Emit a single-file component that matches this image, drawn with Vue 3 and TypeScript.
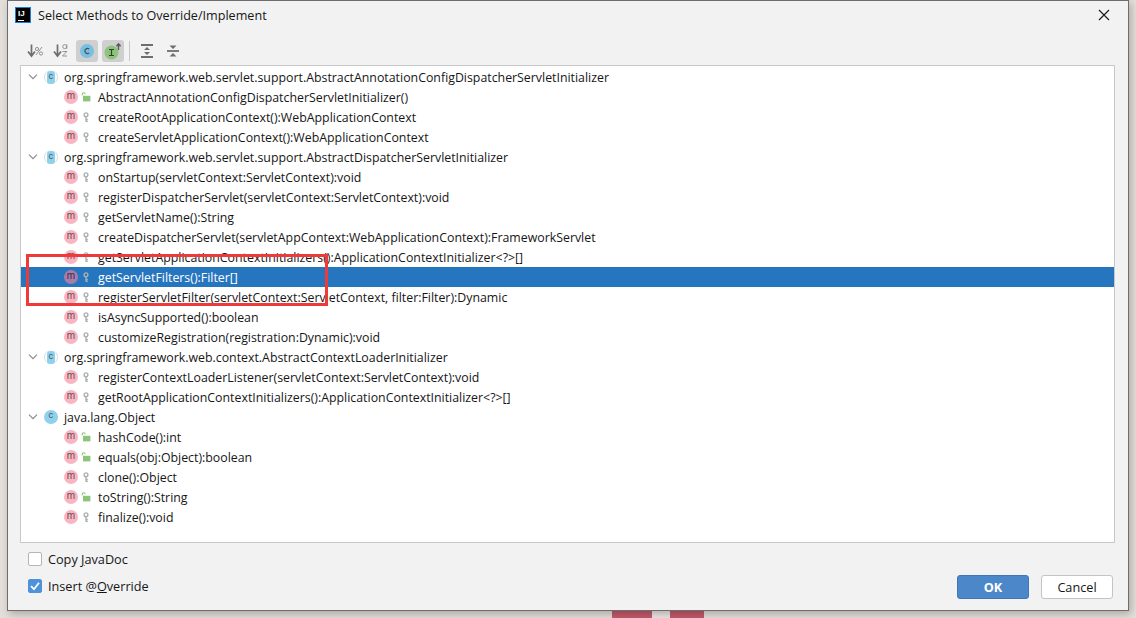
<script setup lang="ts">
type Access = 'public' | 'protected'
interface Method { label: string; access: Access; selected?: boolean }
interface Group { name: string; ghost: boolean; methods: Method[] }

const groups: Group[] = [
  {
    name: 'org.springframework.web.servlet.support.AbstractAnnotationConfigDispatcherServletInitializer',
    ghost: true,
    methods: [
      { label: 'AbstractAnnotationConfigDispatcherServletInitializer()', access: 'public' },
      { label: 'createRootApplicationContext():WebApplicationContext', access: 'protected' },
      { label: 'createServletApplicationContext():WebApplicationContext', access: 'protected' },
    ],
  },
  {
    name: 'org.springframework.web.servlet.support.AbstractDispatcherServletInitializer',
    ghost: true,
    methods: [
      { label: 'onStartup(servletContext:ServletContext):void', access: 'protected' },
      { label: 'registerDispatcherServlet(servletContext:ServletContext):void', access: 'protected' },
      { label: 'getServletName():String', access: 'protected' },
      { label: 'createDispatcherServlet(servletAppContext:WebApplicationContext):FrameworkServlet', access: 'protected' },
      { label: 'getServletApplicationContextInitializers():ApplicationContextInitializer<?>[]', access: 'protected' },
      { label: 'getServletFilters():Filter[]', access: 'protected', selected: true },
      { label: 'registerServletFilter(servletContext:ServletContext, filter:Filter):Dynamic', access: 'protected' },
      { label: 'isAsyncSupported():boolean', access: 'protected' },
      { label: 'customizeRegistration(registration:Dynamic):void', access: 'protected' },
    ],
  },
  {
    name: 'org.springframework.web.context.AbstractContextLoaderInitializer',
    ghost: true,
    methods: [
      { label: 'registerContextLoaderListener(servletContext:ServletContext):void', access: 'protected' },
      { label: 'getRootApplicationContextInitializers():ApplicationContextInitializer<?>[]', access: 'protected' },
    ],
  },
  {
    name: 'java.lang.Object',
    ghost: false,
    methods: [
      { label: 'hashCode():int', access: 'public' },
      { label: 'equals(obj:Object):boolean', access: 'public' },
      { label: 'clone():Object', access: 'protected' },
      { label: 'toString():String', access: 'public' },
      { label: 'finalize():void', access: 'protected' },
    ],
  },
]
</script>

<template>
  <div class="desktop">
    <div class="dialog">
      <header class="titlebar">
        <div class="logo"><span class="logo-text">IJ</span><span class="logo-bar"></span></div>
        <span class="title">Select Methods to Override/Implement</span>
        <svg class="close" width="12" height="12" viewBox="0 0 12 12">
          <path d="M1 1L11 11M11 1L1 11" stroke="#1a1a1a" stroke-width="1.2" fill="none" />
        </svg>
      </header>

      <div class="toolbar">
        <span class="tool">
          <svg width="18" height="16" viewBox="0 0 18 16">
            <path d="M5.5 1.5V12M2 8.5L5.5 13L9 8.5" stroke="#6e6e6e" stroke-width="1.7" fill="none" />
            <path d="M10 12L16 4" stroke="#929292" stroke-width="1" />
            <circle cx="11" cy="6" r="1.6" stroke="#929292" fill="none" />
            <circle cx="15" cy="10.5" r="1.6" stroke="#929292" fill="none" />
          </svg>
        </span>
        <span class="tool">
          <svg width="18" height="16" viewBox="0 0 18 16">
            <path d="M5.5 1.5V12M2 8.5L5.5 13L9 8.5" stroke="#6e6e6e" stroke-width="1.7" fill="none" />
            <circle cx="12.7" cy="3.6" r="2" stroke="#929292" fill="none" />
            <path d="M14.8 1.4V5.8M10.5 8.5H14.9L10.5 13H15.1" stroke="#929292" fill="none" />
          </svg>
        </span>
        <span class="tool on">
          <svg width="16" height="16" viewBox="0 0 16 16">
            <circle cx="8" cy="8" r="7" fill="#78bfe0" />
            <path d="M10.2 6.2A2.5 2.5 0 1 0 10.2 9.8" stroke="#40525e" stroke-width="1.1" fill="none" />
          </svg>
        </span>
        <span class="tool on">
          <svg width="20" height="20" viewBox="0 0 20 20">
            <circle cx="8.5" cy="11.5" r="7" fill="#8cc47c" />
            <path d="M6 8.5H11M8.5 8.5V14.5M6 14.5H11" stroke="#35412f" stroke-width="1.2" fill="none" />
            <path d="M15.5 9V3M13.4 5.2L15.5 2.8L17.6 5.2" stroke="#5a5a5a" stroke-width="1.4" fill="none" />
          </svg>
        </span>
        <span class="divider"></span>
        <span class="tool">
          <svg width="14" height="16" viewBox="0 0 14 16">
            <path d="M1 2H13M1 14H13" stroke="#6e6e6e" stroke-width="1.8" />
            <path d="M7 4L10 7H4ZM7 12L4 9H10Z" fill="#6e6e6e" />
          </svg>
        </span>
        <span class="tool">
          <svg width="14" height="16" viewBox="0 0 14 16">
            <path d="M1 8H13" stroke="#6e6e6e" stroke-width="1.8" />
            <path d="M7 6L3.5 2.6H10.5ZM7 10L10.5 13.4H3.5Z" fill="#6e6e6e" />
          </svg>
        </span>
      </div>

      <section class="tree">
        <template v-for="group in groups" :key="group.name">
          <div class="row">
            <svg class="chevron" width="10" height="6" viewBox="0 0 10 6">
              <path d="M1 .7L5 4.7L9 .7" stroke="#8c8c8c" stroke-width="1.2" fill="none" />
            </svg>
            <span class="class-wrap" :class="{ ghost: group.ghost }">
              <span class="class-icon">c</span>
            </span>
            <span class="text">{{ group.name }}</span>
          </div>
          <div
            v-for="method in group.methods"
            :key="method.label"
            class="row method"
            :class="{ selected: method.selected }"
          >
            <span class="m-icon">m</span>
            <svg v-if="method.access === 'public'" class="access" width="10" height="10" viewBox="0 0 10 10">
              <path d="M1.2 3.6V2.2A1.5 1.5 0 0 1 4.2 2.2" stroke="#8cc47c" stroke-width="1.1" fill="none" />
              <rect x="2" y="3.8" width="7.4" height="5.6" fill="#8cc47c" />
            </svg>
            <svg v-else class="access" width="10" height="10" viewBox="0 0 10 10">
              <circle cx="5" cy="2.8" r="1.9" stroke="#a9b0b4" stroke-width="1.4" fill="none" />
              <path d="M5 4.6V9.8M5 7.4H6.8M5 9.2H6.8" stroke="#a9b0b4" stroke-width="1.4" fill="none" />
            </svg>
            <span class="text">{{ method.label }}</span>
          </div>
        </template>
        <div class="highlight"></div>
      </section>

      <footer class="footer">
        <div class="checks">
          <label class="check">
            <span class="box"></span>
            <span>Copy <u>J</u>avaDoc</span>
          </label>
          <label class="check">
            <span class="box checked">
              <svg width="14" height="14" viewBox="0 0 14 14">
                <path d="M3 7.2L6 10.2L11 3.8" stroke="#fff" stroke-width="1.8" fill="none" />
              </svg>
            </span>
            <span>Insert @<u>O</u>verride</span>
          </label>
        </div>
        <div class="buttons">
          <button class="btn primary" type="button">OK</button>
          <button class="btn" type="button">Cancel</button>
        </div>
      </footer>
    </div>
  </div>
</template>

<style>
html, body { margin: 0; background: #e8e5e1; }
</style>

<style scoped>
.desktop {
  width: 1136px;
  height: 618px;
  overflow: hidden;
  box-sizing: border-box;
  padding-left: 7px;
  font-family: "Open Sans", "Noto Sans", sans-serif;
  font-size: 12.35px;
  color: #161616;
  background: linear-gradient(
    to right,
    #e4dfda 0 612px,
    #c45a6c 612px 652px,
    #ece6e4 652px 670px,
    #c45a6c 670px 704px,
    #e4dfda 704px
  );
}
.dialog {
  width: 1122px;
  height: 611px;
  box-sizing: border-box;
  background: #f2f2f2;
  border: 1px solid #6d6d6d;
  box-shadow: 2px 3px 8px rgba(0, 0, 0, 0.25);
  display: flex;
  flex-direction: column;
}
.titlebar {
  height: 28px;
  display: flex;
  align-items: center;
  padding: 0 18px 0 7px;
  flex: none;
}
.logo {
  width: 16px;
  height: 16px;
  box-sizing: border-box;
  background: #000;
  border: 1px solid #1e7fd9;
  margin-right: 7px;
  position: relative;
  color: #fff;
  flex: none;
}
.logo-text {
  position: absolute;
  left: 2px;
  top: 1px;
  font: 700 8px/9px "Liberation Sans", sans-serif;
}
.logo-bar {
  position: absolute;
  left: 2px;
  bottom: 1px;
  width: 6px;
  height: 1px;
  background: #fff;
}
.title { flex: 1; font-size: 12.6px; }
.close { flex: none; }
.toolbar {
  height: 36px;
  flex: none;
  display: flex;
  align-items: center;
  padding: 8px 0 0 16px;
  gap: 4px;
  box-sizing: border-box;
}
.tool {
  width: 22px;
  height: 22px;
  display: flex;
  align-items: center;
  justify-content: center;
  border-radius: 3px;
}
.tool.on { background: #cfcfcf; }
.divider {
  width: 1px;
  height: 20px;
  background: #c9c9c9;
  margin: 0 2px 0 1px;
}
.tree {
  position: relative;
  height: 478px;
  flex: none;
  box-sizing: border-box;
  margin: 0 13px 0 12px;
  padding-top: 1px;
  background: #fff;
  border: 1px solid #c8c8c8;
}
.row {
  height: 20px;
  display: flex;
  align-items: center;
  padding-left: 7px;
  white-space: nowrap;
}
.chevron { flex: none; margin-right: 6px; }
.class-wrap {
  width: 14px;
  height: 14px;
  display: flex;
  align-items: center;
  justify-content: center;
  margin-right: 6px;
  flex: none;
  box-sizing: border-box;
}
.class-wrap.ghost {
  border-left: 1px solid #d9d9d9;
  border-right: 1px solid #d9d9d9;
  border-radius: 50%;
}
.class-icon {
  width: 14px;
  height: 14px;
  flex: none;
  border-radius: 50%;
  background: #8fd0ec;
  color: #3e5563;
  font: 9px/13px "Liberation Mono", monospace;
  text-align: center;
}
.class-wrap.ghost .class-icon {
  width: 8px;
  height: 13px;
  border-radius: 3px;
}
.method { padding-left: 43px; }
.method.selected { background: #2675bf; color: #fff; }
.m-icon {
  width: 14px;
  height: 14px;
  border-radius: 50%;
  background: #f9b6c2;
  color: #6b4b52;
  font: 10px/12px "Liberation Sans", sans-serif;
  text-align: center;
  flex: none;
  margin-right: 3px;
}
.selected .m-icon { background: #a77ea9; color: #3c2a44; }
.access { flex: none; margin-right: 7px; }
.highlight {
  position: absolute;
  left: 5px;
  top: 188px;
  width: 302px;
  height: 52px;
  border: 3px solid #f03a3a;
  box-sizing: border-box;
  pointer-events: none;
}
.footer {
  flex: 1;
  display: flex;
  justify-content: space-between;
  padding: 3px 15px 0 20px;
  box-sizing: border-box;
  font-size: 12.7px;
}
.checks {
  display: flex;
  flex-direction: column;
  gap: 13px;
  padding-top: 6px;
}
.check {
  display: flex;
  align-items: center;
  gap: 6px;
  height: 14px;
}
.box {
  width: 14px;
  height: 14px;
  box-sizing: border-box;
  border: 1px solid #b5b5b5;
  border-radius: 2px;
  background: #fff;
  display: block;
}
.box.checked { background: #4c93dc; border-color: #4c93dc; position: relative; }
.box.checked svg { position: absolute; left: -1px; top: -1px; }
.buttons {
  display: flex;
  gap: 12px;
  align-items: flex-end;
  padding-bottom: 11px;
}
.btn {
  width: 72px;
  height: 24px;
  box-sizing: border-box;
  border: 1px solid #c4c4c4;
  border-radius: 3px;
  background: #fff;
  font: inherit;
  color: #161616;
  padding: 0;
}
.btn.primary {
  background: #4c87c9;
  border-color: #3f78b8;
  color: #fff;
  font-weight: 700;
}
</style>
